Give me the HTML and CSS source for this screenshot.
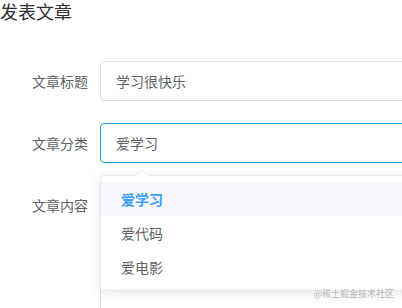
FILE: index.html
```html
<!DOCTYPE html>
<html lang="zh-CN">

<head>
    <meta charset="UTF-8">
    <meta name="viewport" content="width=device-width, initial-scale=1.0">
    <title>发表文章</title>
    <link rel="stylesheet" href="styles.css">
</head>

<body>
    <h3 class="title">发表文章</h3>

    <form class="form" action="">
        <div class="form-item">
            <label class="form-label">文章标题</label>
            <div class="form-content">
                <input class="input" type="text" value="学习很快乐">
            </div>
        </div>

        <div class="form-item">
            <label class="form-label">文章分类</label>
            <div class="form-content select">
                <input class="input focus" type="text" value="爱学习" readonly>
                <div class="dropdown">
                    <span class="arrow"></span>
                    <ul class="options">
                        <li class="option selected">爱学习</li>
                        <li class="option">爱代码</li>
                        <li class="option">爱电影</li>
                    </ul>
                </div>
            </div>
        </div>

        <div class="form-item">
            <label class="form-label">文章内容</label>
            <div class="form-content">
                <textarea class="textarea"></textarea>
            </div>
        </div>
    </form>

    <div class="watermark">@稀土掘金技术社区</div>
</body>

</html>
```

FILE: styles.css
```css
body {
    margin: 0;
    width: 402px;
    height: 308px;
    overflow: hidden;
    background-color: #fff;
    font-family: "Noto Sans CJK SC", "Noto Sans", sans-serif;
    color: #606266;
}

.title {
    margin: 0;
    padding-top: 1px;
    font-size: 18px;
    line-height: 21px;
    font-weight: normal;
    color: #303133;
}

.form {
    width: 620px;
    padding-top: 39px;
}

.form-item {
    display: flex;
    margin-bottom: 22px;
}

.form-label {
    width: 100px;
    box-sizing: border-box;
    padding-right: 12px;
    text-align: right;
    font-size: 14px;
    line-height: 40px;
    color: #606266;
    flex-shrink: 0;
}

.form-content {
    flex: 1;
    position: relative;
}

.input {
    display: block;
    width: 100%;
    height: 40px;
    box-sizing: border-box;
    padding: 0 15px;
    border: 1px solid #dcdfe6;
    border-radius: 4px;
    font-family: inherit;
    font-size: 14px;
    color: #606266;
    outline: none;
    background-color: #fff;
}

.input.focus {
    border-color: #1d9fdc;
}

.dropdown {
    position: absolute;
    top: 52px;
    left: 0;
    width: 100%;
    box-sizing: border-box;
    border: 1px solid #e4e7ed;
    border-radius: 4px;
    background-color: #fff;
    box-shadow: 0 2px 12px rgba(0, 0, 0, 0.1);
    z-index: 10;
}

.arrow {
    position: absolute;
    top: -7px;
    left: 35px;
    width: 0;
    height: 0;
    border-left: 6px solid transparent;
    border-right: 6px solid transparent;
    border-bottom: 6px solid #e4e7ed;
}

.arrow::after {
    content: "";
    position: absolute;
    top: 1px;
    left: -6px;
    border-left: 6px solid transparent;
    border-right: 6px solid transparent;
    border-bottom: 6px solid #fff;
}

.options {
    list-style: none;
    margin: 0;
    padding: 6px 0;
}

.option {
    height: 34px;
    line-height: 34px;
    padding: 0 20px;
    font-size: 14px;
    color: #606266;
}

.option.selected {
    background-color: #f5f7fa;
    color: #409eff;
    font-weight: bold;
}

.textarea {
    display: block;
    width: 100%;
    height: 160px;
    box-sizing: border-box;
    padding: 5px 15px;
    border: 1px solid #dcdfe6;
    border-radius: 4px;
    resize: none;
    font-family: inherit;
    font-size: 14px;
}

.watermark {
    position: absolute;
    right: 8px;
    top: 288px;
    font-size: 9px;
    line-height: 12px;
    color: #b8b8b8;
    z-index: 20;
}
```
